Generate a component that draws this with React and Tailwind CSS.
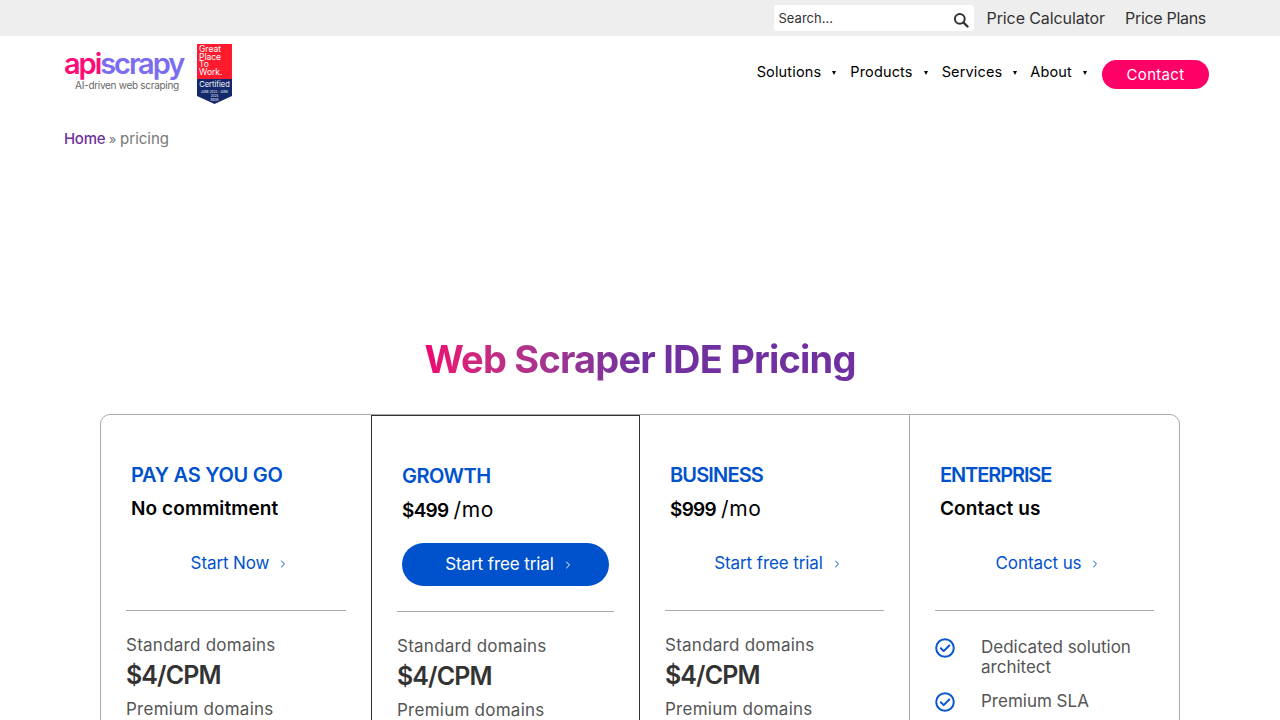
import React from 'react';
import { ChevronRight } from 'lucide-react';

const plans = [
  { name: 'PAY AS YOU GO', nameTrack: 'tracking-[-0.25px]', price: 'No commitment', cta: 'Start Now' },
  { name: 'GROWTH', nameTrack: 'tracking-[-0.5px]', price: '$499', per: '/mo', cta: 'Start free trial', featured: true },
  { name: 'BUSINESS', nameTrack: 'tracking-[-0.85px]', price: '$999', per: '/mo', cta: 'Start free trial' },
];

const CheckIcon = () => (
  <svg width="20" height="20" viewBox="0 0 20 20" fill="none" className="mt-[1px] shrink-0">
    <circle cx="10" cy="10" r="8.8" stroke="#0b57d0" strokeWidth="2" />
    <path d="M5.8 10.2l2.9 2.9 5.6-5.6" stroke="#0b57d0" strokeWidth="2" strokeLinecap="round" strokeLinejoin="round" />
  </svg>
);

const Caret = () => <span className="ml-[11px] mr-[3px] inline-block border-x-[2.5px] border-t-[4px] border-x-transparent border-t-black align-middle" />;

const PlanHead = ({ name, nameTrack, price, per, cta, featured }) => (
  <>
    <div className="pl-[5px]">
      <h3 className={`text-[20px] leading-[24px] font-semibold text-[#0052cc] ${nameTrack}`}>{name}</h3>
      <p className={`mt-[9px] h-[26px] text-[19px] leading-[26px] font-semibold text-black ${per ? 'tracking-[-0.7px]' : 'tracking-[0.1px]'}`}>
        {price}
        {per && <span className="ml-[5px] text-[21px] font-normal tracking-[0.6px]">{per}</span>}
      </p>
    </div>
    <div className="mt-[20px] flex justify-center">
      <a className={featured
        ? 'flex h-[43px] w-[207px] items-center justify-center rounded-full bg-[#0052cc] pl-[8px] text-[17px] tracking-[-0.1px] text-white'
        : 'flex h-[43px] items-center justify-center pl-[8px] text-[17px] tracking-[-0.1px] text-[#0052cc]'}>
        {cta}
        <ChevronRight size={12} className="ml-[8px]" />
      </a>
    </div>
    <hr className="mt-[25px] border-[#aaa]" />
  </>
);

const PlanColumn = ({ plan }) => (
  <div className={plan.featured ? 'border border-[#333] px-[25px] pb-10 pt-[48px]' : 'px-[25px] pb-10 pt-[48px]'}>
    <PlanHead {...plan} />
    <div className="pt-[22px] text-[#555]">
      <p className="text-[17px] leading-[24px] tracking-[0.25px]">Standard domains</p>
      <p className="mt-[3px] text-[25px] leading-[30px] font-semibold tracking-[-0.9px] text-[#333]">$4/CPM</p>
      <p className="mt-[7px] text-[17px] leading-[24px] tracking-[0.25px]">Premium domains</p>
    </div>
  </div>
);

export default function App() {
  return (
    <div className="h-screen overflow-hidden bg-white font-['Inter',sans-serif] text-black">
      {/* top bar */}
      <div className="flex h-9 items-center justify-end bg-[#eeeeee] pr-[74px] text-[16px] text-[#333]">
        <div className="flex h-[26px] w-[200px] items-center justify-between rounded-[3px] bg-white px-[5px]">
          <span className="pt-[2px] text-[13px] text-[#333]">Search...</span>
          <svg width="16" height="16" viewBox="0 0 16 16" fill="none" className="mt-[4px]">
            <circle cx="6.8" cy="6.8" r="4.9" stroke="#333" strokeWidth="2" />
            <path d="M10.5 10.5l4 4" stroke="#333" strokeWidth="2.4" strokeLinecap="round" />
          </svg>
        </div>
        <a className="ml-[13px] tracking-[-0.1px]">Price Calculator</a>
        <a className="ml-[20px] tracking-[-0.3px]">Price Plans</a>
      </div>

      {/* header */}
      <div className="flex h-[78px] items-start justify-between pl-[64px] pr-[71px]">
        <div className="flex items-start">
          <div className="mt-[14px] w-[120px]">
            <div className="whitespace-nowrap text-[29px] leading-[28px] font-semibold tracking-[-2.05px]">
              <span className="text-[#ff0a78]">api</span>
              <span className="text-[#7b6cf0]">scrapy</span>
            </div>
            <div className="mt-[1px] pl-[6px] text-center text-[10px] leading-[12px] tracking-[-0.3px] text-[#666]">AI-driven web scraping</div>
          </div>
          <div className="ml-[13px] mt-[8px] h-[60px] w-[35px] shrink-0">
            <div className="h-[35px] bg-[#ff1a2e] px-[2px] pt-[2px] text-[8.5px] leading-[7.7px] text-white">Great<br />Place<br />To<br />Work.</div>
            <div className="h-[25px] bg-[#14296b] pt-[1px] text-center text-white [clip-path:polygon(0_0,100%_0,100%_68%,50%_100%,0_68%)]">
              <div className="text-[7.5px] leading-[10px]">Certified</div>
              <div className="text-[3px] leading-[4px]">JUNE 2023 - JUNE 2024</div>
              <div className="text-[3px] leading-[4px]">INDIA</div>
            </div>
          </div>
        </div>
        <nav className="mt-[24px] flex items-start text-[14.5px] leading-[24px] tracking-[0.15px]">
          <a className="mr-[11px]">Solutions<Caret /></a>
          <a className="mr-[11px]">Products<Caret /></a>
          <a className="mr-[10px]">Services<Caret /></a>
          <a className="mr-[12px]">About<Caret /></a>
          <a className="h-[29px] w-[107px] rounded-full bg-[#ff0066] text-center text-[15px] leading-[29px] tracking-[0.3px] text-white">Contact</a>
        </nav>
      </div>

      {/* breadcrumb */}
      <div className="mt-[13px] pl-[64px] text-[15px] leading-[24px] text-[#777]">
        <a className="font-medium tracking-[-0.3px] text-[#7030a0]">Home</a><span className="text-[13px]"> » </span>pricing
      </div>

      <h1 className="mx-auto mt-[184px] w-[432px] bg-gradient-to-r from-[#ee0070] to-[#7030a0] to-50% bg-clip-text text-center text-[38px] leading-[48px] font-bold tracking-[-0.8px] whitespace-nowrap text-transparent">
        Web Scraper IDE Pricing
      </h1>

      {/* pricing table */}
      <div className="mx-[100px] mt-[31px] grid grid-cols-[270px_269px_269px_270px] rounded-[10px] border border-[#aaa]">
        {plans.map(plan => <PlanColumn key={plan.name} plan={plan} />)}
        <div className="border-l border-[#aaa] px-[25px] pt-[48px]">
          <PlanHead name="ENTERPRISE" nameTrack="tracking-[-1.1px]" price="Contact us" cta="Contact us" />
          <ul className="pt-[26px] text-[17px] leading-[20px] text-[#555]">
            <li className="flex items-start gap-[26px]"><CheckIcon />Dedicated solution architect</li>
            <li className="mt-[14px] flex items-start gap-[26px]"><CheckIcon />Premium SLA</li>
          </ul>
        </div>
      </div>
    </div>
  );
}
